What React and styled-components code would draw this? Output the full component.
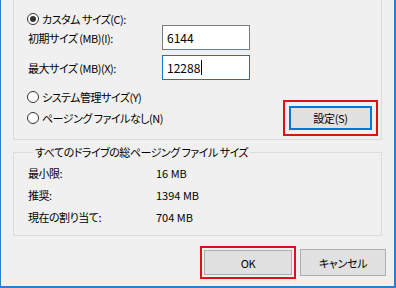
import React from "react";
import styled, { createGlobalStyle } from "styled-components";

const GlobalStyle = createGlobalStyle`
  html, body {
    margin: 0;
    padding: 0;
    background: #f0f0f0;
  }
  body {
    font-family: "Noto Sans CJK JP", "Noto Sans", sans-serif;
    font-size: 11px;
    letter-spacing: -0.5px;
    color: #000;
    font-feature-settings: "palt";
  }
`;

const Window = styled.div`
  box-sizing: border-box;
  width: 396px;
  height: 288px;
  background: #f0f0f0;
  border-left: 1px solid #2b7fd0;
  border-right: 2px solid #2b7fd0;
  border-bottom: 2px solid #2b7fd0;
  padding: 0 12px 0 12px;
  display: flex;
  flex-direction: column;
`;

/* top group is cut off by the screenshot, so no top border */
const TopGroup = styled.div`
  box-sizing: border-box;
  height: 140px;
  border: 1px solid #dcdcdc;
  border-top: none;
  padding: 12px 0 3px 13px;
  display: flex;
  flex-direction: column;
`;

const RadioRow = styled.label`
  display: flex;
  align-items: center;
  gap: 3px;
  height: ${(p) => p.$h || 14}px;
  line-height: 14px;
  white-space: nowrap;
`;

const Radio = styled.span`
  box-sizing: border-box;
  width: 12px;
  height: 12px;
  border-radius: 50%;
  border: 1px solid #333;
  background: #fff;
  display: flex;
  align-items: center;
  justify-content: center;
  flex-shrink: 0;

  &::after {
    content: "";
    width: 6px;
    height: 6px;
    border-radius: 50%;
    background: ${(p) => (p.$checked ? "#333" : "transparent")};
  }
`;

const FieldRow = styled.div`
  display: flex;
  align-items: center;
  height: 25px;
  margin-top: ${(p) => p.$mt || 0}px;
  padding-left: 1px;
`;

const FieldLabel = styled.span`
  width: 134px;
  white-space: nowrap;
`;

const TextBox = styled.div`
  box-sizing: border-box;
  width: 88px;
  height: 25px;
  background: #fff;
  border: 1px solid ${(p) => (p.$focused ? "#0078d7" : "#7a7a7a")};
  padding: 0 4px;
  display: flex;
  align-items: center;
  font-size: 12px;
  letter-spacing: 0;
`;

const Caret = styled.span`
  display: inline-block;
  width: 1px;
  height: 15px;
  background: #000;
  margin-left: 1px;
`;

const OptionArea = styled.div`
  display: flex;
  align-items: flex-end;
  justify-content: space-between;
  margin-top: 10px;
  height: 46px;
  padding-right: 3px;
`;

const RadioColumn = styled.div`
  display: flex;
  flex-direction: column;
  gap: 7px;
  padding-bottom: 11px;
`;

const Highlight = styled.div`
  box-sizing: border-box;
  border: 2px solid #e0101a;
  padding: ${(p) => p.$pad || 2}px;
  display: flex;
`;

const Button = styled.button`
  box-sizing: border-box;
  width: ${(p) => p.$w}px;
  height: ${(p) => p.$h}px;
  background: #e1e1e1;
  border: ${(p) => (p.$focused ? "2px solid #0078d7" : "1px solid #adadad")};
  font-family: inherit;
  font-size: 11px;
  letter-spacing: -0.3px;
  font-feature-settings: "palt";
  color: #000;
  padding: 0;
  margin: 0;
`;

const TotalGroup = styled.fieldset`
  box-sizing: border-box;
  margin: 5px 0 0 0;
  padding: 3px 0 7px 13px;
  border: 1px solid #dcdcdc;
  height: 91px;
  display: flex;
  flex-direction: column;
`;

const Legend = styled.legend`
  margin-left: 6px;
  padding: 0 2px;
  line-height: 14px;
  white-space: nowrap;
`;

const InfoRow = styled.div`
  display: flex;
  align-items: center;
  height: 22px;
  padding-left: 1px;
`;

const InfoLabel = styled.span`
  width: 128px;
`;

const InfoValue = styled.span`
  letter-spacing: 0;
`;

const Footer = styled.div`
  display: flex;
  justify-content: flex-end;
  align-items: center;
  gap: 4px;
  margin-top: 10px;
  margin-right: -4px;
`;

export default function App() {
  return (
    <>
      <GlobalStyle />
      <Window>
        <TopGroup>
          <RadioRow $h={13}>
            <Radio $checked />
            カスタム サイズ(C):
          </RadioRow>
          <FieldRow>
            <FieldLabel>初期サイズ (MB)(I):</FieldLabel>
            <TextBox>6144</TextBox>
          </FieldRow>
          <FieldRow $mt={5}>
            <FieldLabel>最大サイズ (MB)(X):</FieldLabel>
            <TextBox $focused>
              12288
              <Caret />
            </TextBox>
          </FieldRow>
          <OptionArea>
            <RadioColumn>
              <RadioRow>
                <Radio />
                システム管理サイズ(Y)
              </RadioRow>
              <RadioRow>
                <Radio />
                ページング ファイルなし(N)
              </RadioRow>
            </RadioColumn>
            <Highlight $pad={4}>
              <Button $w={83} $h={24} $focused>
                設定(S)
              </Button>
            </Highlight>
          </OptionArea>
        </TopGroup>

        <TotalGroup>
          <Legend>すべてのドライブの総ページング ファイル サイズ</Legend>
          <InfoRow>
            <InfoLabel>最小限:</InfoLabel>
            <InfoValue>16 MB</InfoValue>
          </InfoRow>
          <InfoRow>
            <InfoLabel>推奨:</InfoLabel>
            <InfoValue>1394 MB</InfoValue>
          </InfoRow>
          <InfoRow>
            <InfoLabel>現在の割り当て:</InfoLabel>
            <InfoValue>704 MB</InfoValue>
          </InfoRow>
        </TotalGroup>

        <Footer>
          <Highlight>
            <Button $w={88} $h={25}>OK</Button>
          </Highlight>
          <Button $w={86} $h={27}>キャンセル</Button>
        </Footer>
      </Window>
    </>
  );
}
